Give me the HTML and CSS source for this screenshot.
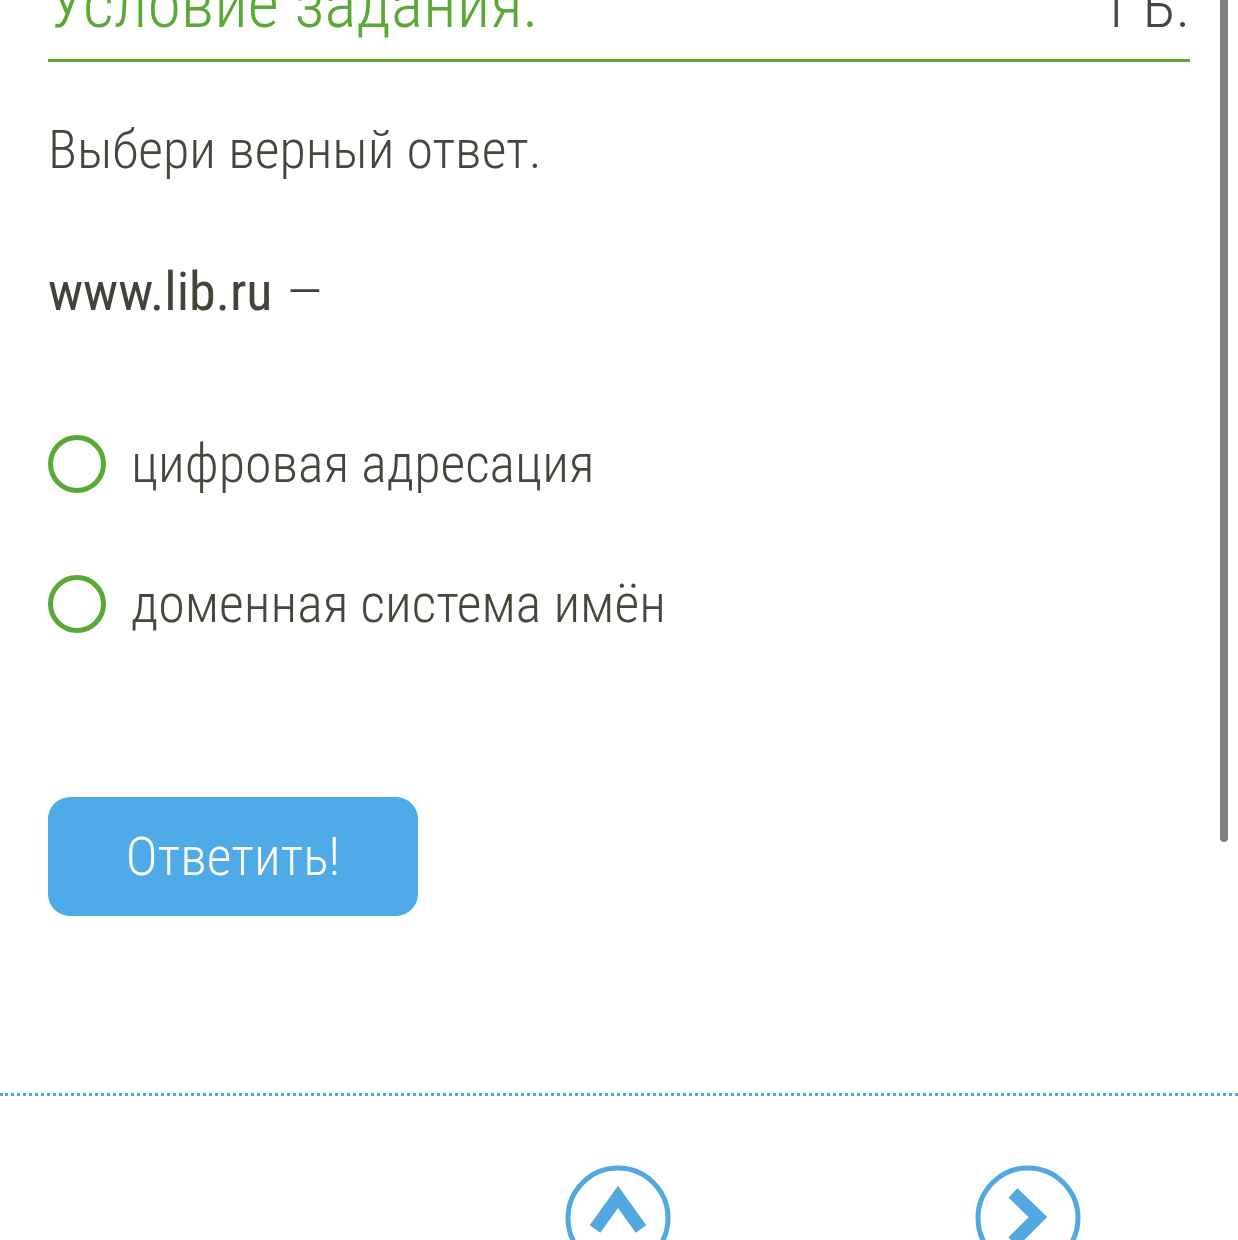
FILE: index.html
```html
<!DOCTYPE html>
<html lang="ru">
<head>
<meta charset="utf-8">
<link rel="stylesheet" href="styles.css">
</head>
<body>
<div class="scrollbar"></div>
<main class="page">
  <header class="task-head">
    <h1 class="task-title">Условие задания:</h1>
    <span class="task-score">1 Б.</span>
  </header>
  <p class="prompt">Выбери верный ответ.</p>
  <p class="question">www.lib.ru <span class="dash">–</span></p>
  <ul class="options">
    <li class="option"><span class="radio"></span><span class="option-text">цифровая адресация</span></li>
    <li class="option"><span class="radio"></span><span class="option-text">доменная система имён</span></li>
  </ul>
  <button class="answer-btn">Ответить!</button>
</main>
<div class="divider"></div>
<nav class="nav">
  <span class="nav-btn nav-up">
    <svg viewBox="0 0 106 106" width="106" height="106"><circle cx="53" cy="53" r="50" fill="none" stroke="#52a8e0" stroke-width="5"/><path d="M30 64 L53 32 L76 64" fill="none" stroke="#52a8e0" stroke-width="13" stroke-linejoin="miter"/></svg>
  </span>
  <span class="nav-btn nav-next">
    <svg viewBox="0 0 106 106" width="106" height="106"><circle cx="53" cy="53" r="50" fill="none" stroke="#52a8e0" stroke-width="5"/><path d="M38 28 L63 52 L38 77" fill="none" stroke="#52a8e0" stroke-width="13" stroke-linejoin="miter"/></svg>
  </span>
</nav>
</body>
</html>
```
FILE: styles.css
```css
html, body {
  margin: 0;
  padding: 0;
  background: #ffffff;
  overflow: hidden;
  height: 1240px;
}
body {
  font-family: Roboto, "Liberation Sans", sans-serif;
  font-stretch: condensed;
  font-weight: 300;
  color: #46463c;
}
.scrollbar {
  position: absolute;
  left: 1220px;
  top: -10px;
  width: 8px;
  height: 852px;
  background: #808080;
  border-radius: 4px;
}
.page {
  padding: 0 48px;
  width: 1142px;
}
.task-head {
  display: flex;
  justify-content: space-between;
  align-items: baseline;
  margin-top: -28px;
  padding-bottom: 20px;
  border-bottom: 3px solid #5aa836;
}
.task-title {
  margin: 0;
  font-size: 68px;
  line-height: 64px;
  font-weight: 300;
  color: #5aa836;
}
.task-score {
  font-size: 60px;
  line-height: 64px;
  color: #46463c;
}
.prompt {
  margin: 0;
  margin-top: 56px;
  font-size: 54px;
  line-height: 64px;
}
.question {
  margin: 0;
  margin-top: 78px;
  font-size: 54px;
  line-height: 64px;
  font-weight: 400;
  color: #43433a;
}
.dash {
  font-weight: 300;
  display: inline-block;
  transform: scaleX(1.3);
  transform-origin: left center;
}
.options {
  list-style: none;
  margin: 0;
  padding: 0;
  margin-top: 108px;
  display: flex;
  flex-direction: column;
  gap: 76px;
}
.option {
  display: flex;
  align-items: center;
  gap: 25px;
  height: 64px;
}
.radio {
  box-sizing: border-box;
  width: 58px;
  height: 58px;
  border: 5px solid #5aa836;
  border-radius: 50%;
  flex: none;
}
.option-text {
  font-size: 54px;
  line-height: 64px;
  color: #46463c;
}
.answer-btn {
  display: block;
  margin-top: 161px;
  width: 370px;
  height: 119px;
  border: none;
  border-radius: 22px;
  background: #4eabe8;
  color: #ffffff;
  font-family: Roboto, "Liberation Sans", sans-serif;
  font-stretch: condensed;
  font-weight: 300;
  font-size: 54px;
  padding: 0;
}
.divider {
  margin-top: 177px;
  height: 0;
  border-top: 3px dotted #4fa6dc;
}
.nav {
  display: flex;
  padding-top: 69px;
}
.nav-btn {
  display: block;
  width: 106px;
  height: 106px;
}
.nav-up {
  margin-left: 565px;
}
.nav-next {
  margin-left: 304px;
}
.nav-btn svg {
  display: block;
}
```
